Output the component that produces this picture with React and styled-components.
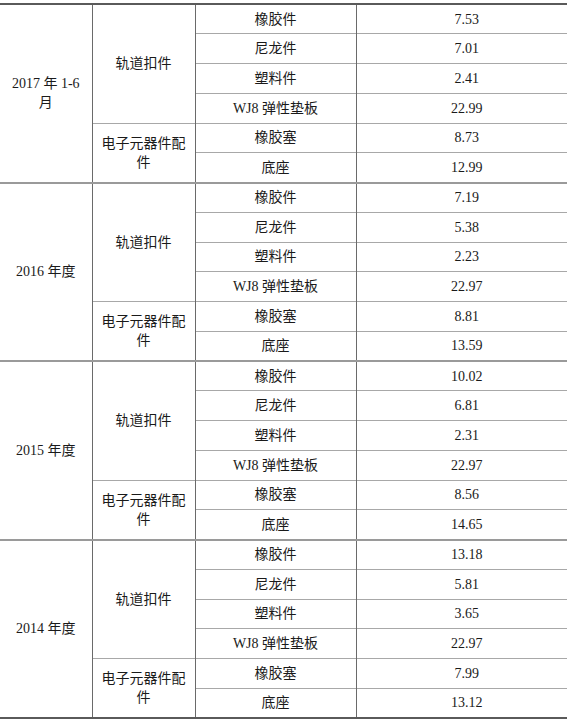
import React from "react";
import styled, { createGlobalStyle } from "styled-components";

const Global = createGlobalStyle`
  html, body { margin: 0; padding: 0; background: #fff; overflow: hidden; }
  body { font-family: "Liberation Serif", "Noto Sans CJK SC", serif; }
`;

const Page = styled.div`
  width: 567px;
  height: 724px;
  overflow: hidden;
  padding-top: 3px;
  box-sizing: border-box;
`;

const Table = styled.table`
  border-collapse: collapse;
  table-layout: fixed;
  width: 577px;
  border-top: 2px solid #5a5a5a;
  border-bottom: 2px solid #5a5a5a;
  font-size: 14px;
  color: #1a1a1a;
`;

const Row = styled.tr`
  height: 29.75px;
`;

const Cell = styled.td`
  padding: 0;
  text-align: center;
  vertical-align: middle;
  line-height: 19px;
  border-top: ${(p) => (p.$section ? "2px solid #9a9a9a" : "1px solid #a8a8a8")};
  border-left: ${(p) => (p.$first ? "none" : "1px solid #6a6a6a")};
  border-right: none;
`;

const data = [
  { period: ["2017 年 1-6", "月"], vals: ["7.53", "7.01", "2.41", "22.99", "8.73", "12.99"] },
  { period: ["2016 年度"], vals: ["7.19", "5.38", "2.23", "22.97", "8.81", "13.59"] },
  { period: ["2015 年度"], vals: ["10.02", "6.81", "2.31", "22.97", "8.56", "14.65"] },
  { period: ["2014 年度"], vals: ["13.18", "5.81", "3.65", "22.97", "7.99", "13.12"] },
];

const items = ["橡胶件", "尼龙件", "塑料件", "WJ8 弹性垫板", "橡胶塞", "底座"];

export default function App() {
  return (
    <Page>
      <Global />
      <Table>
        <colgroup>
          <col style={{ width: 92 }} />
          <col style={{ width: 103 }} />
          <col style={{ width: 161 }} />
          <col style={{ width: 221 }} />
        </colgroup>
        <tbody>
          {data.map((sec, si) =>
            items.map((it, i) => {
              const section = si > 0 && i === 0;
              return (
                <Row key={`${si}-${i}`}>
                  {i === 0 && (
                    <Cell $first $section={section} rowSpan={6}>
                      {sec.period.map((l, k) => (
                        <React.Fragment key={k}>
                          {k > 0 && <br />}
                          {l}
                        </React.Fragment>
                      ))}
                    </Cell>
                  )}
                  {i === 0 && (
                    <Cell $section={section} rowSpan={4}>
                      轨道扣件
                    </Cell>
                  )}
                  {i === 4 && (
                    <Cell rowSpan={2}>
                      电子元器件配
                      <br />件
                    </Cell>
                  )}
                  <Cell $section={section}>{it}</Cell>
                  <Cell $section={section}>{sec.vals[i]}</Cell>
                </Row>
              );
            })
          )}
        </tbody>
      </Table>
    </Page>
  );
}
